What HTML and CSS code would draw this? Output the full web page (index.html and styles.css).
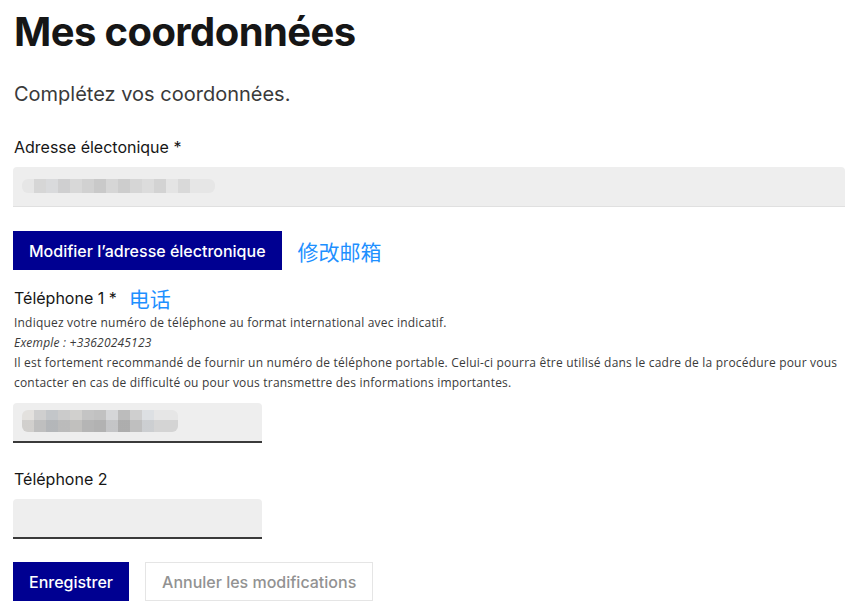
FILE: index.html
```html
<!DOCTYPE html>
<html lang="fr">
<head>
    <meta charset="UTF-8">
    <meta name="viewport" content="width=device-width, initial-scale=1.0">
    <title>Mes coordonnées</title>
    <link rel="stylesheet" href="styles.css">
</head>
<body>
    <div class="page">
        <h1>Mes coordonnées</h1>
        <p class="lead">Complétez vos coordonnées.</p>

        <div class="field field-email">
            <label class="label">Adresse électonique *</label>
            <div class="input input-disabled">
                <span class="blur blur-email"></span>
            </div>
        </div>

        <div class="action-row">
            <button class="btn btn-primary">Modifier l’adresse électronique</button>
            <span class="note">修改邮箱</span>
        </div>

        <div class="field field-phone">
            <div class="label-row">
                <label class="label">Téléphone 1 *</label>
                <span class="note">电话</span>
            </div>
            <div class="hint">
                Indiquez votre numéro de téléphone au format international avec indicatif.<br>
                <em>Exemple : +33620245123</em><br>
                Il est fortement recommandé de fournir un numéro de téléphone portable. Celui-ci pourra être utilisé dans le cadre de la procédure pour vous contacter en cas de difficulté ou pour vous transmettre des informations importantes.
            </div>
            <div class="input input-short">
                <span class="blur blur-phone"></span>
            </div>
        </div>

        <div class="field field-phone2">
            <label class="label">Téléphone 2</label>
            <div class="input input-short"></div>
        </div>

        <div class="buttons">
            <button class="btn btn-primary">Enregistrer</button>
            <button class="btn btn-secondary">Annuler les modifications</button>
        </div>
    </div>
</body>
</html>
```

FILE: styles.css
```css
body {
    margin: 0;
    background: #fff;
    color: #161616;
    font-family: Inter, "Noto Sans", sans-serif;
}
.page {
    padding: 8px 3px 0 13px;
}
h1 {
    font-size: 40px;
    line-height: 48px;
    font-weight: 700;
    letter-spacing: -0.6px;
    margin: 0 0 0 1px;
}
.lead {
    font-size: 20px;
    line-height: 28px;
    color: #3a3a3a;
    margin: 24px 0 0 1px;
}
.field {
    margin-top: 28px;
}
.field-email {
    margin-top: 27px;
}
.label {
    display: block;
    font-size: 16px;
    line-height: 24px;
    margin-left: 1px;
}
.input {
    position: relative;
    height: 38px;
    margin-top: 8px;
    background: #eee;
    border-radius: 4px 4px 0 0;
    border-bottom: 2px solid #3a3a3a;
}
.input-disabled {
    border-bottom: 1px solid #e0e0e0;
    height: 39px;
}
.input-short {
    width: 249px;
}
.blur {
    position: absolute;
    display: block;
    border-radius: 6px;
}
.blur-email {
    left: 9px;
    top: 12px;
    width: 193px;
    height: 14px;
    background:
        linear-gradient(90deg, #e6e6e6 0 12px, #d6d6d6 12px 24px, #d9dadc 24px 36px, #cfcfd0 36px 48px, #d8d8d8 48px 60px, #d1d1d1 60px 72px, #c9c9c9 72px 84px, #d6d6d6 84px 96px, #cdcdcd 96px 108px, #d6d6d6 108px 120px, #dcdcdc 120px 132px, #d3d3d3 132px 144px, #e4e4e4 144px 156px, #d9d9d9 156px 168px, #e6e6e6 168px 193px);
}
.blur-phone {
    left: 9px;
    top: 7px;
    width: 156px;
    height: 22px;
    background:
        linear-gradient(180deg, transparent 0 10px, rgba(0, 0, 0, 0.08) 10px 22px),
        linear-gradient(90deg, #e3e1de 0 12px, #cfcfcf 12px 24px, #c3c6c9 24px 36px, #cbcbcb 36px 48px, #d1d0ce 48px 60px, #c4c4c4 60px 72px, #c1c1c1 72px 84px, #d5d6d8 84px 96px, #bcbcbc 96px 108px, #cfcfcf 108px 120px, #dde0e3 120px 132px, #e6e6e6 132px 156px);
}
.action-row {
    display: flex;
    align-items: center;
    gap: 16px;
    margin-top: 24px;
}
.btn {
    font-family: Inter, "Noto Sans", sans-serif;
    font-size: 16px;
    font-weight: 500;
    height: 39px;
    padding: 0 16px;
    border: none;
    cursor: pointer;
}
.btn-primary {
    background: #000091;
    color: #fff;
}
.btn-secondary {
    background: #fff;
    color: #929292;
    border: 1px solid #e5e5e5;
}
.note {
    color: #1e90ff;
    font-family: "Noto Sans CJK SC", sans-serif;
    font-size: 21px;
    line-height: 24px;
}
.field-phone {
    margin-top: 16px;
}
.label-row {
    display: flex;
    align-items: center;
    gap: 12px;
}
.hint {
    font-family: "Open Sans", sans-serif;
    font-size: 12px;
    line-height: 20px;
    letter-spacing: 0.2px;
    color: #3a3a3a;
    margin: 3px 0 0 1px;
}
.hint + .input {
    margin-top: 10px;
}
.field-phone2 {
    margin-top: 24px;
}
.buttons {
    display: flex;
    gap: 16px;
    margin-top: 23px;
}
```
